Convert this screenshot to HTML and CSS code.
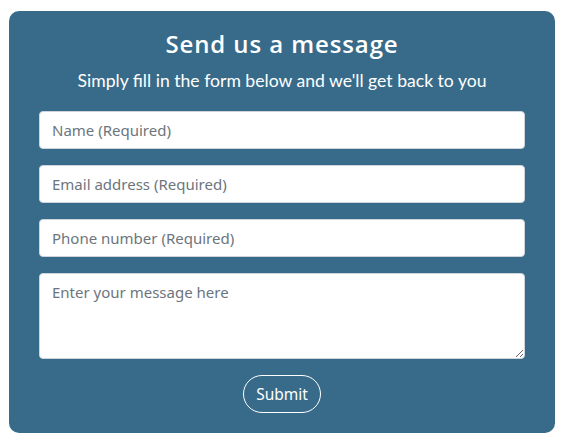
FILE: index.html
```html
<!DOCTYPE html>
<html>
<head>
<meta charset="utf-8">
<link rel="stylesheet" href="styles.css">
</head>
<body>
<div class="wrap">
  <form class="card">
    <h2 class="title">Send us a message</h2>
    <p class="subtitle">Simply fill in the form below and we'll get back to you</p>
    <div class="fields">
      <input class="field" type="text" placeholder="Name (Required)">
      <input class="field" type="email" placeholder="Email address (Required)">
      <input class="field" type="tel" placeholder="Phone number (Required)">
      <textarea class="field area" placeholder="Enter your message here"></textarea>
    </div>
    <div class="actions">
      <button class="submit" type="button">Submit</button>
    </div>
  </form>
</div>
</body>
</html>
```
FILE: styles.css
```css
html, body {
  margin: 0;
  padding: 0;
  background: #ffffff;
}
.wrap {
  padding: 11px 8px 14px 9px;
}
.card {
  background: #386b8a;
  border-radius: 10px;
  padding: 17px 30px 20px 30px;
  display: flex;
  flex-direction: column;
}
.title {
  margin: 0;
  text-align: center;
  color: #ffffff;
  font-family: "Open Sans", sans-serif;
  font-weight: 600;
  font-size: 24px;
  line-height: 32px;
  letter-spacing: 0.9px;
}
.subtitle {
  margin: 8px 0 0 0;
  text-align: center;
  color: #ffffff;
  font-family: Lato, sans-serif;
  font-size: 17.6px;
  line-height: 26px;
}
.fields {
  margin-top: 17px;
  display: flex;
  flex-direction: column;
  gap: 16px;
}
.field {
  box-sizing: border-box;
  height: 38px;
  width: 100%;
  margin: 0;
  padding: 6px 12px;
  border: 1px solid #ced4da;
  border-radius: 4px;
  background: #ffffff;
  font-family: "Noto Sans", sans-serif;
  font-size: 15px;
  color: #495057;
}
.field::placeholder {
  color: #6c757d;
  opacity: 1;
}
.area {
  height: 86px;
  padding-top: 8px;
  resize: vertical;
}
.actions {
  margin-top: 16px;
  display: flex;
  justify-content: center;
}
.submit {
  height: 38px;
  padding: 0 12px;
  border: 1px solid #ffffff;
  border-radius: 19px;
  background: transparent;
  color: #ffffff;
  font-family: "Noto Sans", sans-serif;
  font-size: 15.5px;
}
```
